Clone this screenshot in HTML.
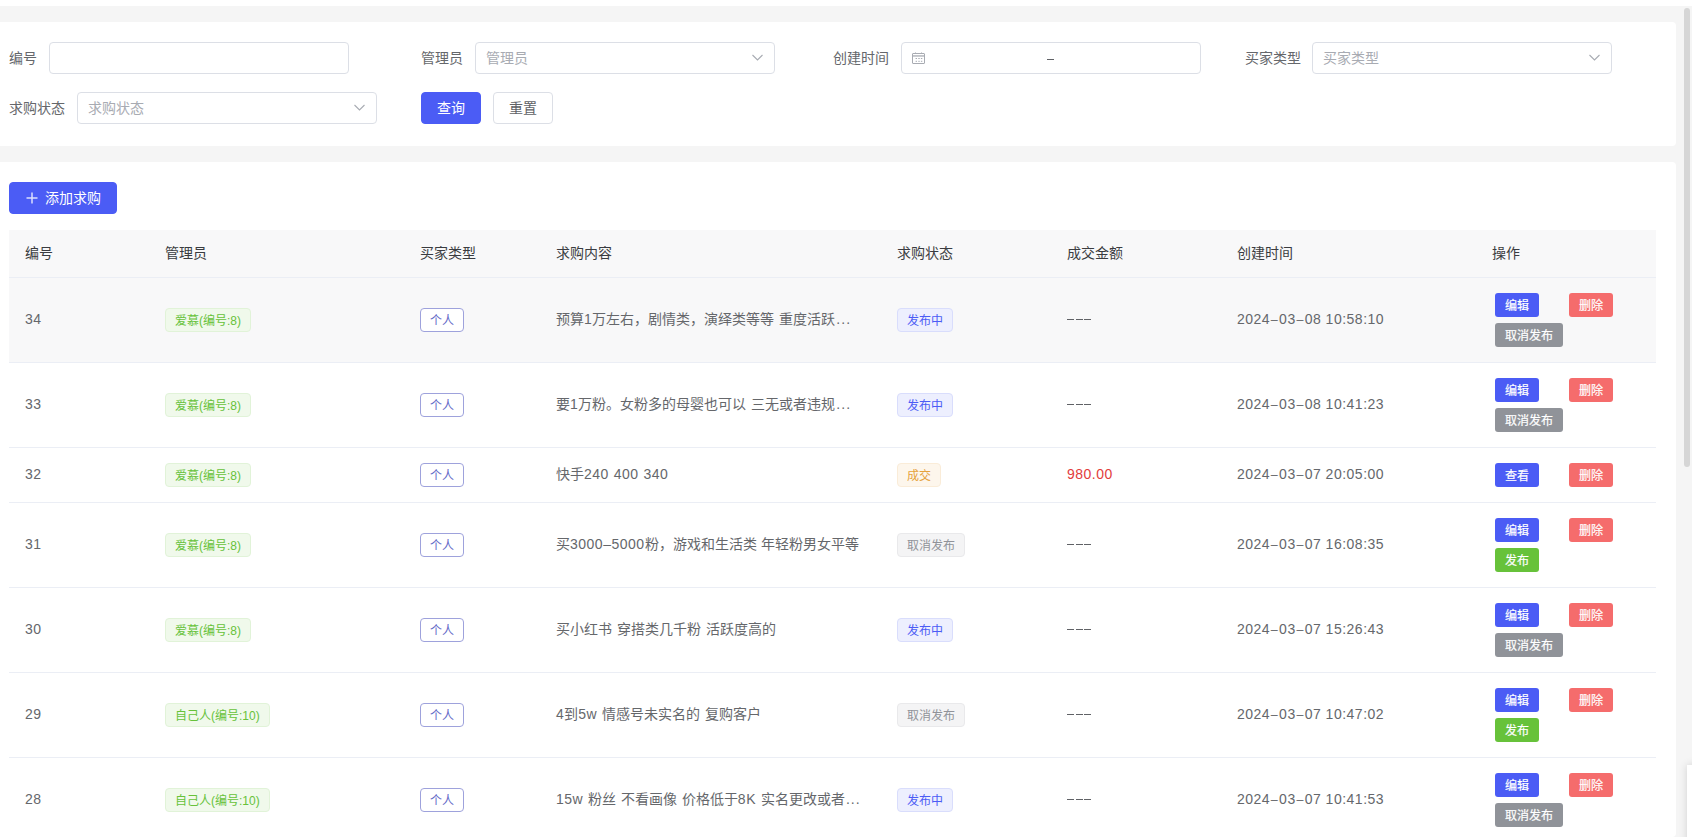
<!DOCTYPE html>
<html lang="zh-CN"><head><meta charset="utf-8">
<style>
*{box-sizing:border-box;margin:0;padding:0}
html,body{width:1692px;height:837px;overflow:hidden;background:#fff}
body{font-family:"Liberation Sans",sans-serif;font-size:14px;color:#65676b;position:relative}
.abs{position:absolute}
.bg{position:absolute;left:0;top:6px;width:1692px;height:831px;background:#f5f5f5}
.card{position:absolute;left:0;width:1676px;background:#fff;border-radius:0 4px 4px 0}
.thumb{position:absolute;left:1684px;top:8px;width:6px;height:459px;border-radius:3px;background:#d6d6d6}
.lbl{position:absolute;height:32px;line-height:32px;color:#65676b;font-size:14px;white-space:nowrap}
.inp{position:absolute;height:32px;width:300px;border:1px solid #dcdfe6;border-radius:4px;background:#fff}
.ph{position:absolute;left:10px;top:0;line-height:30px;color:#a8abb2;font-size:14px;white-space:nowrap}
.chev{position:absolute;right:11px;top:11px;width:12px;height:7px}
.btn{position:absolute;height:32px;border-radius:4px;font-size:14px;line-height:30px;text-align:center;white-space:nowrap}
.row{position:absolute;left:9px;width:1647px;border-bottom:1px solid #ebeef5;background:#fff}
.c{position:absolute;top:0;height:100%;display:flex;align-items:center;white-space:nowrap;line-height:20px;padding-bottom:2px}
.num{letter-spacing:0.5px}
.dt{letter-spacing:0.5px}
.fd{font-size:12.5px;letter-spacing:1.3px;margin-left:0.7px}
.dash{display:inline-block;width:7px;height:1px;background:#606266;margin-right:1.5px;vertical-align:middle}
.wsp{word-spacing:1px}
.ell{letter-spacing:1.1px;margin-left:1px}
.tag{position:relative;top:1px;display:inline-block;height:24px;line-height:24px;padding:0 9px;font-size:12px;border:1px solid;border-radius:4px;white-space:nowrap}
.t-g{background:#f0f9eb;border-color:#e1f3d8;color:#67c23a}
.t-p{background:#fff;border-color:#9ea2dc;color:#6469c8}
.t-b{background:#edeffe;border-color:#d9ddfc;color:#4b5cf5}
.t-w{background:#fdf6ec;border-color:#faecd8;color:#e6a23c}
.t-i{background:#f4f4f5;border-color:#e9e9eb;color:#909399}
.ops{position:absolute;left:1477px;top:0;height:100%;width:160px}
.sb{position:absolute;height:24px;line-height:26px;font-size:12px;color:#fff;-webkit-text-stroke:0.2px #fff;border-radius:3px;text-align:center;white-space:nowrap}
.sb-p{background:#4b5cf5}
.sb-d{background:#f56c6c}
.sb-i{background:#909399}
.sb-s{background:#67c23a}
</style></head>
<body>
<div class="bg"></div>
<div class="thumb"></div>

<!-- filter card -->
<div class="card" style="top:22px;height:124px"></div>
<div class="card" style="top:162px;height:675px"></div>
<div class="lbl" style="left:9px;top:42px">编号</div>
<div class="inp" style="left:49px;top:42px"></div>
<div class="lbl" style="left:421px;top:42px">管理员</div>
<div class="inp" style="left:475px;top:42px"><span class="ph">管理员</span><svg class="chev" viewBox="0 0 12 7" width="12" height="7"><polyline points="1.5,1 6.5,6 11.5,1" fill="none" stroke="#a8abb2" stroke-width="1.1"/></svg></div>
<div class="lbl" style="left:833px;top:42px">创建时间</div>
<div class="inp" style="left:901px;top:42px"><svg class="abs" style="left:9px;top:8px" width="16" height="16" viewBox="0 0 16 16"><rect x="1.5" y="2.5" width="12" height="10" rx="0.5" fill="none" stroke="#a8abb2" stroke-width="1"/><rect x="1.5" y="4.3" width="12" height="1.3" fill="#a8abb2"/><line x1="4.5" y1="1.5" x2="4.5" y2="3" stroke="#a8abb2"/><line x1="10.5" y1="1.5" x2="10.5" y2="3" stroke="#a8abb2"/><g fill="#a8abb2"><rect x="4.6" y="7" width="1.4" height="1"/><rect x="7.3" y="7" width="1.4" height="1"/><rect x="9.9" y="7" width="1.4" height="1"/><rect x="4.6" y="9.8" width="1.4" height="1"/><rect x="7.3" y="9.8" width="1.4" height="1"/><rect x="9.9" y="9.8" width="1.4" height="1"/></g></svg><div class="abs" style="left:145px;top:16px;width:7px;height:1px;background:#606266"></div></div>
<div class="lbl" style="left:1245px;top:42px">买家类型</div>
<div class="inp" style="left:1312px;top:42px"><span class="ph">买家类型</span><svg class="chev" viewBox="0 0 12 7" width="12" height="7"><polyline points="1.5,1 6.5,6 11.5,1" fill="none" stroke="#a8abb2" stroke-width="1.1"/></svg></div>
<div class="lbl" style="left:9px;top:92px">求购状态</div>
<div class="inp" style="left:77px;top:92px"><span class="ph">求购状态</span><svg class="chev" viewBox="0 0 12 7" width="12" height="7"><polyline points="1.5,1 6.5,6 11.5,1" fill="none" stroke="#a8abb2" stroke-width="1.1"/></svg></div>
<div class="btn" style="left:421px;top:92px;width:60px;background:#4b5cf5;color:#fff;border:1px solid #4b5cf5">查询</div>
<div class="btn" style="left:493px;top:92px;width:60px;background:#fff;color:#606266;border:1px solid #dcdfe6">重置</div>
<div class="btn" style="left:9px;top:182px;width:108px;background:#4b5cf5;color:#fff;border:1px solid #4b5cf5;text-align:left"><svg class="abs" style="left:16px;top:9px" width="12" height="12" viewBox="0 0 12 12"><path d="M6 0.5V11.5M0.5 6H11.5" stroke="rgba(255,255,255,0.8)" stroke-width="1.5" fill="none"/></svg><span class="abs" style="left:35px;top:0">添加求购</span></div>
<div class="row" style="top:230px;height:48px;background:#f8f8f9;color:#3a3c40"><div class="c" style="left:16px">编号</div><div class="c" style="left:156px">管理员</div><div class="c" style="left:411px">买家类型</div><div class="c" style="left:547px">求购内容</div><div class="c" style="left:888px">求购状态</div><div class="c" style="left:1058px">成交金额</div><div class="c" style="left:1228px">创建时间</div><div class="c" style="left:1483px">操作</div></div>
<div class="row" style="top:278px;height:85px;background:#f8f8f9"><div class="c num" style="left:16px">34</div><div class="c" style="left:156px"><span class="tag t-g">爱慕(编号:8)</span></div><div class="c" style="left:411px"><span class="tag t-p">个人</span></div><div class="c wsp" style="left:547px"><span>预算<span class="num">1</span>万左右，剧情类，演绎类等等 重度活跃<span class="ell">...</span></span></div><div class="c" style="left:888px"><span class="tag t-b">发布中</span></div><div class="c num" style="left:1058px;"><span class="dash"></span><span class="dash"></span><span class="dash"></span></div><div class="c dt" style="left:1228px"><span>2024<span class="fd">–</span>03<span class="fd">–</span>08 10:58:10</span></div><div class="ops"><div class="sb sb-p" style="left:9px;top:15px;width:44px">编辑</div><div class="sb sb-d" style="left:83px;top:15px;width:44px">删除</div><div class="sb sb-i" style="left:9px;top:45px;width:68px">取消发布</div></div></div>
<div class="row" style="top:363px;height:85px"><div class="c num" style="left:16px">33</div><div class="c" style="left:156px"><span class="tag t-g">爱慕(编号:8)</span></div><div class="c" style="left:411px"><span class="tag t-p">个人</span></div><div class="c wsp" style="left:547px"><span>要<span class="num">1</span>万粉。女粉多的母婴也可以 三无或者违规<span class="ell">...</span></span></div><div class="c" style="left:888px"><span class="tag t-b">发布中</span></div><div class="c num" style="left:1058px;"><span class="dash"></span><span class="dash"></span><span class="dash"></span></div><div class="c dt" style="left:1228px"><span>2024<span class="fd">–</span>03<span class="fd">–</span>08 10:41:23</span></div><div class="ops"><div class="sb sb-p" style="left:9px;top:15px;width:44px">编辑</div><div class="sb sb-d" style="left:83px;top:15px;width:44px">删除</div><div class="sb sb-i" style="left:9px;top:45px;width:68px">取消发布</div></div></div>
<div class="row" style="top:448px;height:55px"><div class="c num" style="left:16px">32</div><div class="c" style="left:156px"><span class="tag t-g">爱慕(编号:8)</span></div><div class="c" style="left:411px"><span class="tag t-p">个人</span></div><div class="c wsp" style="left:547px"><span>快手<span class="num">240</span> <span class="num">400</span> <span class="num">340</span></span></div><div class="c" style="left:888px"><span class="tag t-w">成交</span></div><div class="c num" style="left:1058px;color:#e23c3c;">980.00</div><div class="c dt" style="left:1228px"><span>2024<span class="fd">–</span>03<span class="fd">–</span>07 20:05:00</span></div><div class="ops"><div class="sb sb-p" style="left:9px;top:15px;width:44px">查看</div><div class="sb sb-d" style="left:83px;top:15px;width:44px">删除</div></div></div>
<div class="row" style="top:503px;height:85px"><div class="c num" style="left:16px">31</div><div class="c" style="left:156px"><span class="tag t-g">爱慕(编号:8)</span></div><div class="c" style="left:411px"><span class="tag t-p">个人</span></div><div class="c wsp" style="left:547px"><span>买<span class="num">3000–5000</span>粉，游戏和生活类 年轻粉男女平等</span></div><div class="c" style="left:888px"><span class="tag t-i">取消发布</span></div><div class="c num" style="left:1058px;"><span class="dash"></span><span class="dash"></span><span class="dash"></span></div><div class="c dt" style="left:1228px"><span>2024<span class="fd">–</span>03<span class="fd">–</span>07 16:08:35</span></div><div class="ops"><div class="sb sb-p" style="left:9px;top:15px;width:44px">编辑</div><div class="sb sb-d" style="left:83px;top:15px;width:44px">删除</div><div class="sb sb-s" style="left:9px;top:45px;width:44px">发布</div></div></div>
<div class="row" style="top:588px;height:85px"><div class="c num" style="left:16px">30</div><div class="c" style="left:156px"><span class="tag t-g">爱慕(编号:8)</span></div><div class="c" style="left:411px"><span class="tag t-p">个人</span></div><div class="c wsp" style="left:547px"><span>买小红书 穿搭类几千粉 活跃度高的</span></div><div class="c" style="left:888px"><span class="tag t-b">发布中</span></div><div class="c num" style="left:1058px;"><span class="dash"></span><span class="dash"></span><span class="dash"></span></div><div class="c dt" style="left:1228px"><span>2024<span class="fd">–</span>03<span class="fd">–</span>07 15:26:43</span></div><div class="ops"><div class="sb sb-p" style="left:9px;top:15px;width:44px">编辑</div><div class="sb sb-d" style="left:83px;top:15px;width:44px">删除</div><div class="sb sb-i" style="left:9px;top:45px;width:68px">取消发布</div></div></div>
<div class="row" style="top:673px;height:85px"><div class="c num" style="left:16px">29</div><div class="c" style="left:156px"><span class="tag t-g">自己人(编号:10)</span></div><div class="c" style="left:411px"><span class="tag t-p">个人</span></div><div class="c wsp" style="left:547px"><span><span class="num">4</span>到<span class="num">5w</span> 情感号未实名的 复购客户</span></div><div class="c" style="left:888px"><span class="tag t-i">取消发布</span></div><div class="c num" style="left:1058px;"><span class="dash"></span><span class="dash"></span><span class="dash"></span></div><div class="c dt" style="left:1228px"><span>2024<span class="fd">–</span>03<span class="fd">–</span>07 10:47:02</span></div><div class="ops"><div class="sb sb-p" style="left:9px;top:15px;width:44px">编辑</div><div class="sb sb-d" style="left:83px;top:15px;width:44px">删除</div><div class="sb sb-s" style="left:9px;top:45px;width:44px">发布</div></div></div>
<div class="row" style="top:758px;height:85px"><div class="c num" style="left:16px">28</div><div class="c" style="left:156px"><span class="tag t-g">自己人(编号:10)</span></div><div class="c" style="left:411px"><span class="tag t-p">个人</span></div><div class="c wsp" style="left:547px"><span><span class="num">15w</span> 粉丝 不看画像 价格低于<span class="num">8K</span> 实名更改或者<span class="ell">...</span></span></div><div class="c" style="left:888px"><span class="tag t-b">发布中</span></div><div class="c num" style="left:1058px;"><span class="dash"></span><span class="dash"></span><span class="dash"></span></div><div class="c dt" style="left:1228px"><span>2024<span class="fd">–</span>03<span class="fd">–</span>07 10:41:53</span></div><div class="ops"><div class="sb sb-p" style="left:9px;top:15px;width:44px">编辑</div><div class="sb sb-d" style="left:83px;top:15px;width:44px">删除</div><div class="sb sb-i" style="left:9px;top:45px;width:68px">取消发布</div></div></div>
<div class="abs" style="left:1687px;top:765px;width:300px;height:200px;background:#fff;box-shadow:0 0 8px rgba(0,0,0,0.15)"></div>
</body></html>
